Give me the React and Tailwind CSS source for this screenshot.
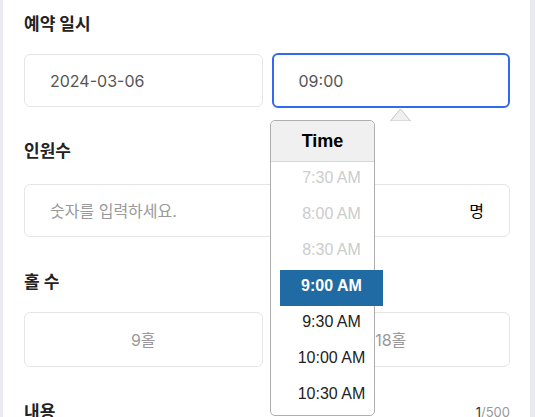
import React from 'react';

const KR = { fontFamily: 'Inter, "Noto Sans CJK KR", sans-serif' };
const TP = { fontFamily: '"Liberation Sans", Arial, sans-serif' };

const times = [
  { label: '7:30 AM', disabled: true },
  { label: '8:00 AM', disabled: true },
  { label: '8:30 AM', disabled: true },
  { label: '9:00 AM', selected: true },
  { label: '9:30 AM' },
  { label: '10:00 AM' },
  { label: '10:30 AM' },
];

// Label row used by every form section
const Label = ({ children, className = '' }) => (
  <div className={`text-[17px] leading-6 font-bold text-[#222] ${className}`} style={KR}>
    {children}
  </div>
);

const TimePopup = () => (
  <>
    {/* triangle under the focused input */}
    <svg className="absolute left-[390px] top-[108px]" width="21" height="13" viewBox="0 0 21 13">
      <path d="M0.5 13 L10.5 1 L20.5 13 Z" fill="#f0f0f0" stroke="#c4c4c4" strokeWidth="1" />
    </svg>
    <div className="absolute left-[270px] top-[120px] w-[105px] h-[296px] bg-white border border-[#aeaeae] rounded-[5px]" style={TP}>
      <div className="h-[41px] bg-[#f0f0f0] border-b border-[#d6d6d6] rounded-t-[5px] flex items-center justify-center text-[18px] font-bold text-black">
        Time
      </div>
      <ul className="ml-[9px] w-[103px] h-[253px] overflow-hidden">
        {times.map((t) => (
          <li
            key={t.label}
            className={`h-[36px] leading-[32px] text-center text-[16px] ${
              t.selected
                ? 'bg-[#216ba5] text-white font-bold'
                : t.disabled
                ? 'text-[#ccc]'
                : 'text-[#222]'
            }`}
          >
            {t.label}
          </li>
        ))}
      </ul>
    </div>
  </>
);

export default function App() {
  return (
    <div className="relative w-[535px] h-[417px] overflow-hidden bg-[#e9eaef]">
      <div className="ml-[3px] w-[527px] h-full bg-white pl-[21px] pr-[20px] pt-[12px]">
        <Label>예약 일시</Label>
        <div className="mt-[18px] grid grid-cols-2 gap-[9px]">
          <div className="h-[53px] border border-[#e5e5e5] rounded-[6px] flex items-center pl-[25px] text-[16px] text-[#555]" style={KR}>
            2024-03-06
          </div>
          <div className="h-[55px] -mt-px border-2 border-[#2f6af0] rounded-[6px] flex items-center pl-[25px] text-[16px] text-[#555]" style={KR}>
            09:00
          </div>
        </div>

        <Label className="mt-[31px]">인원수</Label>
        <div className="mt-[21px] h-[53px] border border-[#e5e5e5] rounded-[6px] flex items-center justify-between pl-[25px] pr-[25px] text-[16px]" style={KR}>
          <span className="text-[#999]">숫자를 입력하세요.</span>
          <span className="text-black">명</span>
        </div>

        <Label className="mt-[33px]">홀 수</Label>
        <div className="mt-[18px] grid grid-cols-2 gap-[9px]">
          <div className="h-[55px] border border-[#e5e5e5] rounded-[6px] flex items-center justify-center text-[16px] text-[#999]" style={KR}>
            9홀
          </div>
          <div className="h-[55px] border border-[#e5e5e5] rounded-[6px] flex items-center justify-center text-[16px] text-[#999]" style={KR}>
            18홀
          </div>
        </div>

        <div className="mt-[33px] flex items-start justify-between">
          <Label>내용</Label>
          <span className="mt-[4px] text-[13px] leading-4 text-[#999]" style={KR}>
            <span className="text-[#333]">1</span>/500
          </span>
        </div>
      </div>
      <TimePopup />
    </div>
  );
}
